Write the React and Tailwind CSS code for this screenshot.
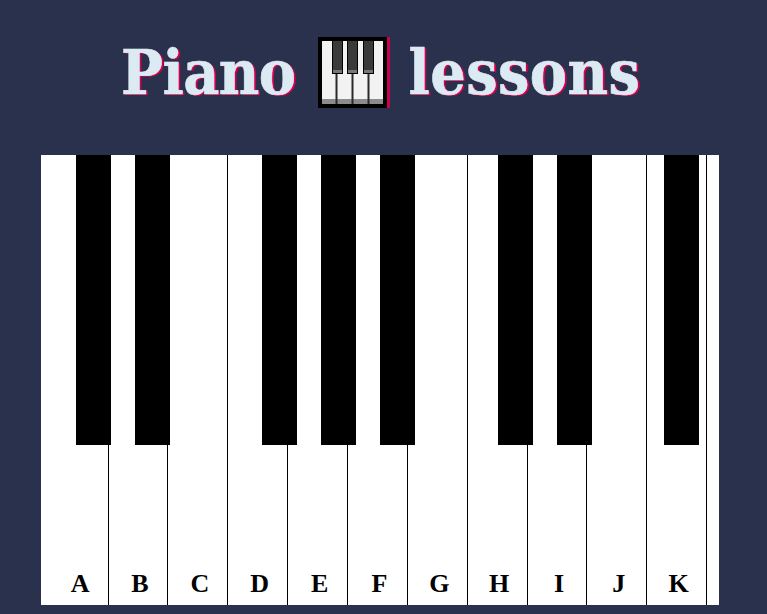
const whiteKeys = ["A", "B", "C", "D", "E", "F", "G", "H", "I", "J", "K"];

function PianoEmoji() {
  return (
    <svg width="72" height="72" viewBox="0 0 72 72" className="block shrink-0 mt-[2px] mr-[-1px]">
      <rect x="3" y="0" width="69" height="71" fill="#cc0050" />
      <rect x="0" y="0" width="69" height="71" fill="#000" />
      <rect x="4" y="4" width="61" height="63" fill="#f2f2f2" />
      <rect x="4" y="62" width="61" height="5" fill="#8c8c8c" />
      <rect x="17.5" y="36" width="2" height="31" fill="#2a2a2a" />
      <rect x="33.5" y="36" width="2" height="31" fill="#2a2a2a" />
      <rect x="49.5" y="36" width="2" height="31" fill="#2a2a2a" />
      <rect x="14" y="3" width="11" height="34" fill="#000" />
      <rect x="29" y="3" width="11" height="34" fill="#000" />
      <rect x="45" y="3" width="11" height="34" fill="#000" />
      <rect x="15" y="4" width="9" height="32" fill="#3a3a3a" />
      <rect x="30" y="4" width="9" height="32" fill="#3a3a3a" />
      <rect x="46" y="4" width="9" height="32" fill="#3a3a3a" />
      <rect x="15" y="33" width="9" height="3" fill="#777" />
      <rect x="30" y="33" width="9" height="3" fill="#777" />
      <rect x="46" y="33" width="9" height="3" fill="#777" />
    </svg>
  );
}

export default function App() {
  return (
    <div className="w-[767px] h-[614px] bg-[#2a314d] overflow-hidden flex flex-col">
      {/* Title */}
      <h1 className="h-[155px] pb-[11px] pl-[121px] flex items-center gap-[20px] text-[#dbeaf3] font-bold text-[62px] font-['DejaVu_Serif_Condensed','DejaVu_Serif',serif] [font-stretch:condensed] [-webkit-text-stroke:0.6px_#dbeaf3] [text-shadow:2px_1px_0_#d6004f]">
        <span className="tracking-[-0.5px] mr-[2px]">Piano</span>
        <PianoEmoji />
        <span className="tracking-[0.45px]">lessons</span>
      </h1>

      {/* Keyboard */}
      <div className="relative ml-[41px] w-[678px] h-[450px] bg-white flex pl-[7.7px] font-['Liberation_Serif',serif] font-bold text-[26px] text-black">
        {whiteKeys.map((key) => (
          <div
            key={key}
            className="w-[59.87px] h-full border-r border-black flex items-end justify-center pb-[2px] pl-[4px]"
          >
            {key}
          </div>
        ))}

        {/* Black keys */}
        <div className="absolute top-0 left-[35px] flex">
          <div className="w-[35px] h-[290px] bg-black" />
          <div className="w-[35px] h-[290px] bg-black ml-[24px]" />
          <div className="w-[35px] h-[290px] bg-black ml-[92px]" />
          <div className="w-[35px] h-[290px] bg-black ml-[24px]" />
          <div className="w-[35px] h-[290px] bg-black ml-[24px]" />
          <div className="w-[35px] h-[290px] bg-black ml-[83px]" />
          <div className="w-[35px] h-[290px] bg-black ml-[24px]" />
          <div className="w-[35px] h-[290px] bg-black ml-[72px]" />
        </div>
      </div>
    </div>
  );
}
